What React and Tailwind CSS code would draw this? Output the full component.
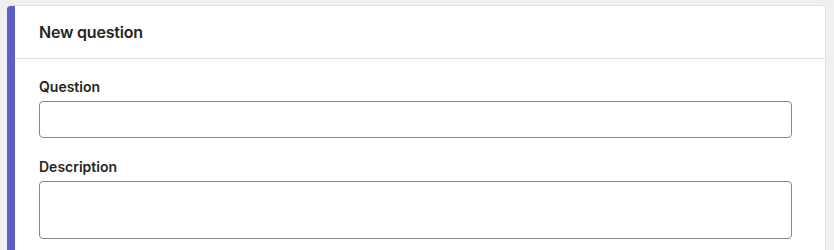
export default function App() {
  return (
    <div
      className="min-h-screen bg-[#f0f0f0] pl-[7px] pr-[8px] pt-[5px]"
      style={{ fontFamily: 'Inter, "Noto Sans", sans-serif' }}
    >
      <div className="flex rounded-[4px] border border-l-0 border-[#e0e0e0] bg-white overflow-hidden">
        {/* accent bar */}
        <div className="w-[8px] shrink-0 bg-[#5b5fc7]" />
        <div className="flex-1 min-w-0">
          <div className="border-b border-[#e0e0e0] px-[24px] pt-[14px] pb-[14px]">
            <h2 className="text-[16px] leading-[24px] font-semibold tracking-[-0.2px] text-[#242424]">New question</h2>
          </div>
          <div className="pl-[24px] pr-[33px] pt-[18px] pb-[24px]">
            <label className="block text-[14px] leading-[20px] font-semibold text-[#242424]">Question</label>
            <input
              type="text"
              className="mt-[4px] block h-[37px] w-full rounded-[4px] border border-[#8a8886] bg-white px-[10px] text-[14px] outline-none"
            />
            <label className="mt-[19px] block text-[14px] leading-[20px] font-semibold text-[#242424]">Description</label>
            <textarea
              className="mt-[4px] block h-[58px] w-full resize-none rounded-[4px] border border-[#8a8886] bg-white px-[10px] py-[6px] text-[14px] outline-none"
            />
          </div>
        </div>
      </div>
    </div>
  )
}
